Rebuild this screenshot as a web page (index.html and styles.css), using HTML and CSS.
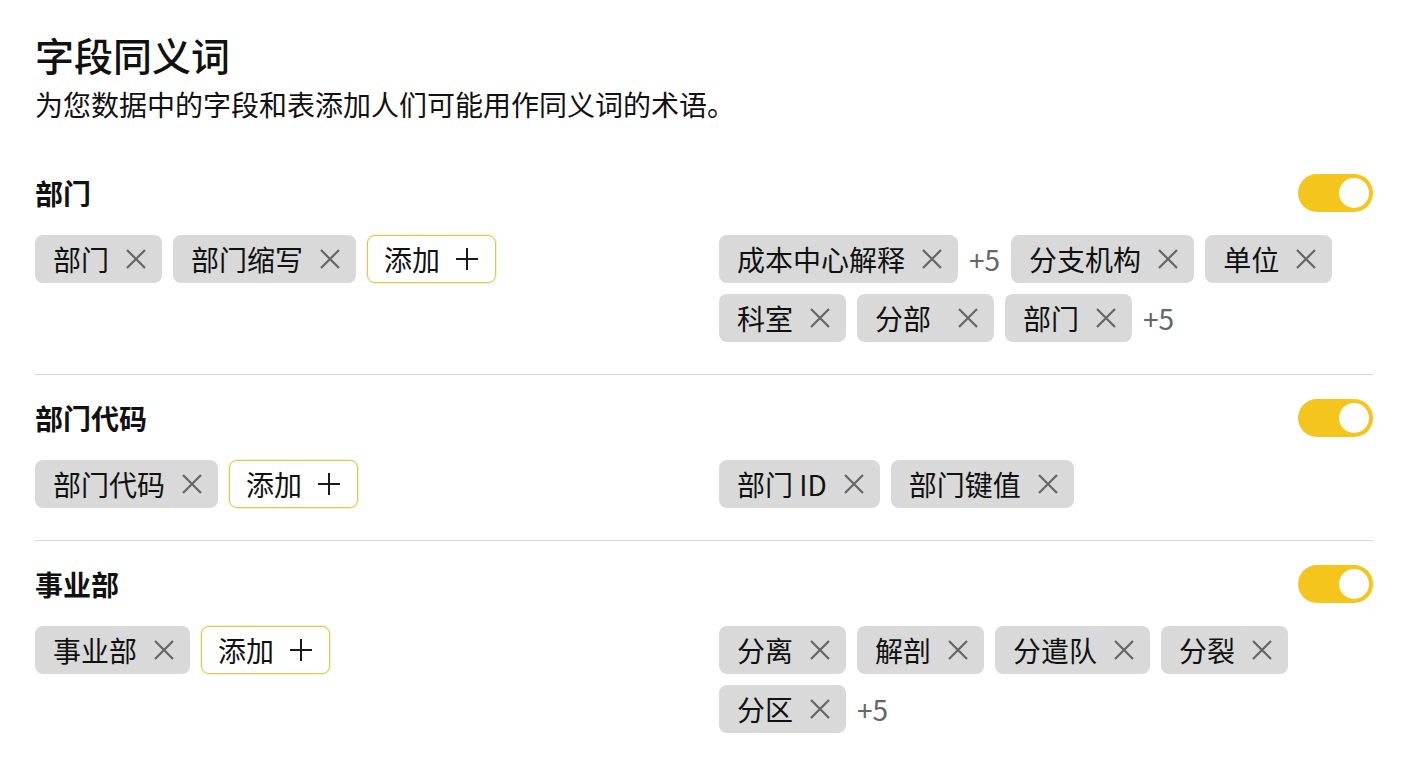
FILE: index.html
```html
<!DOCTYPE html>
<html lang="zh-CN">
<head>
<meta charset="utf-8">
<title>字段同义词</title>
<link rel="stylesheet" href="styles.css">
</head>
<body>
<div class="page">
  <header class="intro">
    <h1 class="title">字段同义词</h1>
    <p class="subtitle">为您数据中的字段和表添加人们可能用作同义词的术语。</p>
  </header>

  <section class="field">
    <div class="field-head">
      <h2 class="field-name">部门</h2>
      <span class="toggle"><span class="knob"></span></span>
    </div>
    <div class="field-body">
      <div class="chips">
        <span class="chip">部门<svg class="x" viewBox="0 0 22 22"><path d="M2 2L20 20M20 2L2 20"/></svg></span>
        <span class="chip">部门缩写<svg class="x" viewBox="0 0 22 22"><path d="M2 2L20 20M20 2L2 20"/></svg></span>
        <span class="add">添加<svg class="plus" viewBox="0 0 24 24"><path d="M12 1V23M1 12H23"/></svg></span>
      </div>
      <div class="chips">
        <span class="chip">成本中心解释<svg class="x" viewBox="0 0 22 22"><path d="M2 2L20 20M20 2L2 20"/></svg></span>
        <span class="more">+5</span>
        <span class="chip">分支机构<svg class="x" viewBox="0 0 22 22"><path d="M2 2L20 20M20 2L2 20"/></svg></span>
        <span class="chip">单位<svg class="x" viewBox="0 0 22 22"><path d="M2 2L20 20M20 2L2 20"/></svg></span>
        <span class="chip">科室<svg class="x" viewBox="0 0 22 22"><path d="M2 2L20 20M20 2L2 20"/></svg></span>
        <span class="chip chip-wide">分部<svg class="x" viewBox="0 0 22 22"><path d="M2 2L20 20M20 2L2 20"/></svg></span>
        <span class="chip">部门<svg class="x" viewBox="0 0 22 22"><path d="M2 2L20 20M20 2L2 20"/></svg></span>
        <span class="more">+5</span>
      </div>
    </div>
  </section>

  <section class="field">
    <div class="field-head">
      <h2 class="field-name">部门代码</h2>
      <span class="toggle"><span class="knob"></span></span>
    </div>
    <div class="field-body">
      <div class="chips">
        <span class="chip">部门代码<svg class="x" viewBox="0 0 22 22"><path d="M2 2L20 20M20 2L2 20"/></svg></span>
        <span class="add">添加<svg class="plus" viewBox="0 0 24 24"><path d="M12 1V23M1 12H23"/></svg></span>
      </div>
      <div class="chips">
        <span class="chip">部门 ID<svg class="x" viewBox="0 0 22 22"><path d="M2 2L20 20M20 2L2 20"/></svg></span>
        <span class="chip">部门键值<svg class="x" viewBox="0 0 22 22"><path d="M2 2L20 20M20 2L2 20"/></svg></span>
      </div>
    </div>
  </section>

  <section class="field">
    <div class="field-head">
      <h2 class="field-name">事业部</h2>
      <span class="toggle"><span class="knob"></span></span>
    </div>
    <div class="field-body">
      <div class="chips">
        <span class="chip">事业部<svg class="x" viewBox="0 0 22 22"><path d="M2 2L20 20M20 2L2 20"/></svg></span>
        <span class="add">添加<svg class="plus" viewBox="0 0 24 24"><path d="M12 1V23M1 12H23"/></svg></span>
      </div>
      <div class="chips">
        <span class="chip">分离<svg class="x" viewBox="0 0 22 22"><path d="M2 2L20 20M20 2L2 20"/></svg></span>
        <span class="chip">解剖<svg class="x" viewBox="0 0 22 22"><path d="M2 2L20 20M20 2L2 20"/></svg></span>
        <span class="chip">分遣队<svg class="x" viewBox="0 0 22 22"><path d="M2 2L20 20M20 2L2 20"/></svg></span>
        <span class="chip">分裂<svg class="x" viewBox="0 0 22 22"><path d="M2 2L20 20M20 2L2 20"/></svg></span>
        <span class="chip">分区<svg class="x" viewBox="0 0 22 22"><path d="M2 2L20 20M20 2L2 20"/></svg></span>
        <span class="more">+5</span>
      </div>
    </div>
  </section>
</div>
</body>
</html>
```

FILE: styles.css
```css
* { box-sizing: border-box; }

html, body {
  margin: 0;
  padding: 0;
  background: #ffffff;
}

body {
  font-family: "Noto Sans CJK SC", "Noto Sans", sans-serif;
  color: #111111;
}

.page {
  padding: 30px 35px 0 35px;
}

.intro {
  margin-bottom: 52px;
}

.title {
  margin: 0;
  font-size: 39px;
  line-height: 48px;
  font-weight: 500;
  letter-spacing: 0;
}

.subtitle {
  margin: 8px 0 0 0;
  font-size: 28px;
  line-height: 36px;
  font-weight: 400;
}

.field {
  padding: 24px 0 32px 0;
  border-bottom: 1px solid #d9d9d9;
}

.field:first-of-type {
  padding-top: 0;
}

.field:last-of-type {
  border-bottom: none;
}

.field-head {
  display: flex;
  align-items: center;
  justify-content: space-between;
  height: 38px;
}

.field-name {
  margin: 0;
  font-size: 28px;
  line-height: 38px;
  font-weight: 700;
}

.toggle {
  width: 75px;
  height: 38px;
  border-radius: 19px;
  background: #f3c51d;
  display: flex;
  align-items: center;
  justify-content: flex-end;
  padding-right: 4px;
}

.knob {
  width: 30px;
  height: 30px;
  border-radius: 50%;
  background: #ffffff;
}

.field-body {
  display: grid;
  grid-template-columns: 1fr 1fr;
  column-gap: 30px;
  margin-top: 23px;
}

.chips {
  display: flex;
  flex-wrap: wrap;
  align-items: center;
  align-content: flex-start;
  gap: 11px 11px;
}

.chip {
  display: inline-flex;
  align-items: center;
  gap: 16px;
  height: 48px;
  padding: 0 15px 0 18px;
  border-radius: 8px;
  background: #d9d9d9;
  font-size: 28px;
  line-height: 48px;
  white-space: nowrap;
}

.chip-wide {
  gap: 26px;
}

.x {
  width: 22px;
  height: 22px;
  flex: none;
}

.x path {
  stroke: #666666;
  stroke-width: 2.2;
  fill: none;
}

.add {
  display: inline-flex;
  align-items: center;
  gap: 15px;
  height: 48px;
  padding: 0 16px 0 16px;
  border-radius: 8px;
  border: 1.5px solid #e3c650;
  box-shadow: 0 0 0 1px rgba(240, 212, 100, 0.35);
  background: #ffffff;
  font-size: 28px;
  line-height: 45px;
  white-space: nowrap;
}

.plus {
  width: 24px;
  height: 24px;
  flex: none;
}

.plus path {
  stroke: #1a1a1a;
  stroke-width: 2;
  fill: none;
}

.more {
  font-size: 28px;
  line-height: 48px;
  color: #666666;
}
```
